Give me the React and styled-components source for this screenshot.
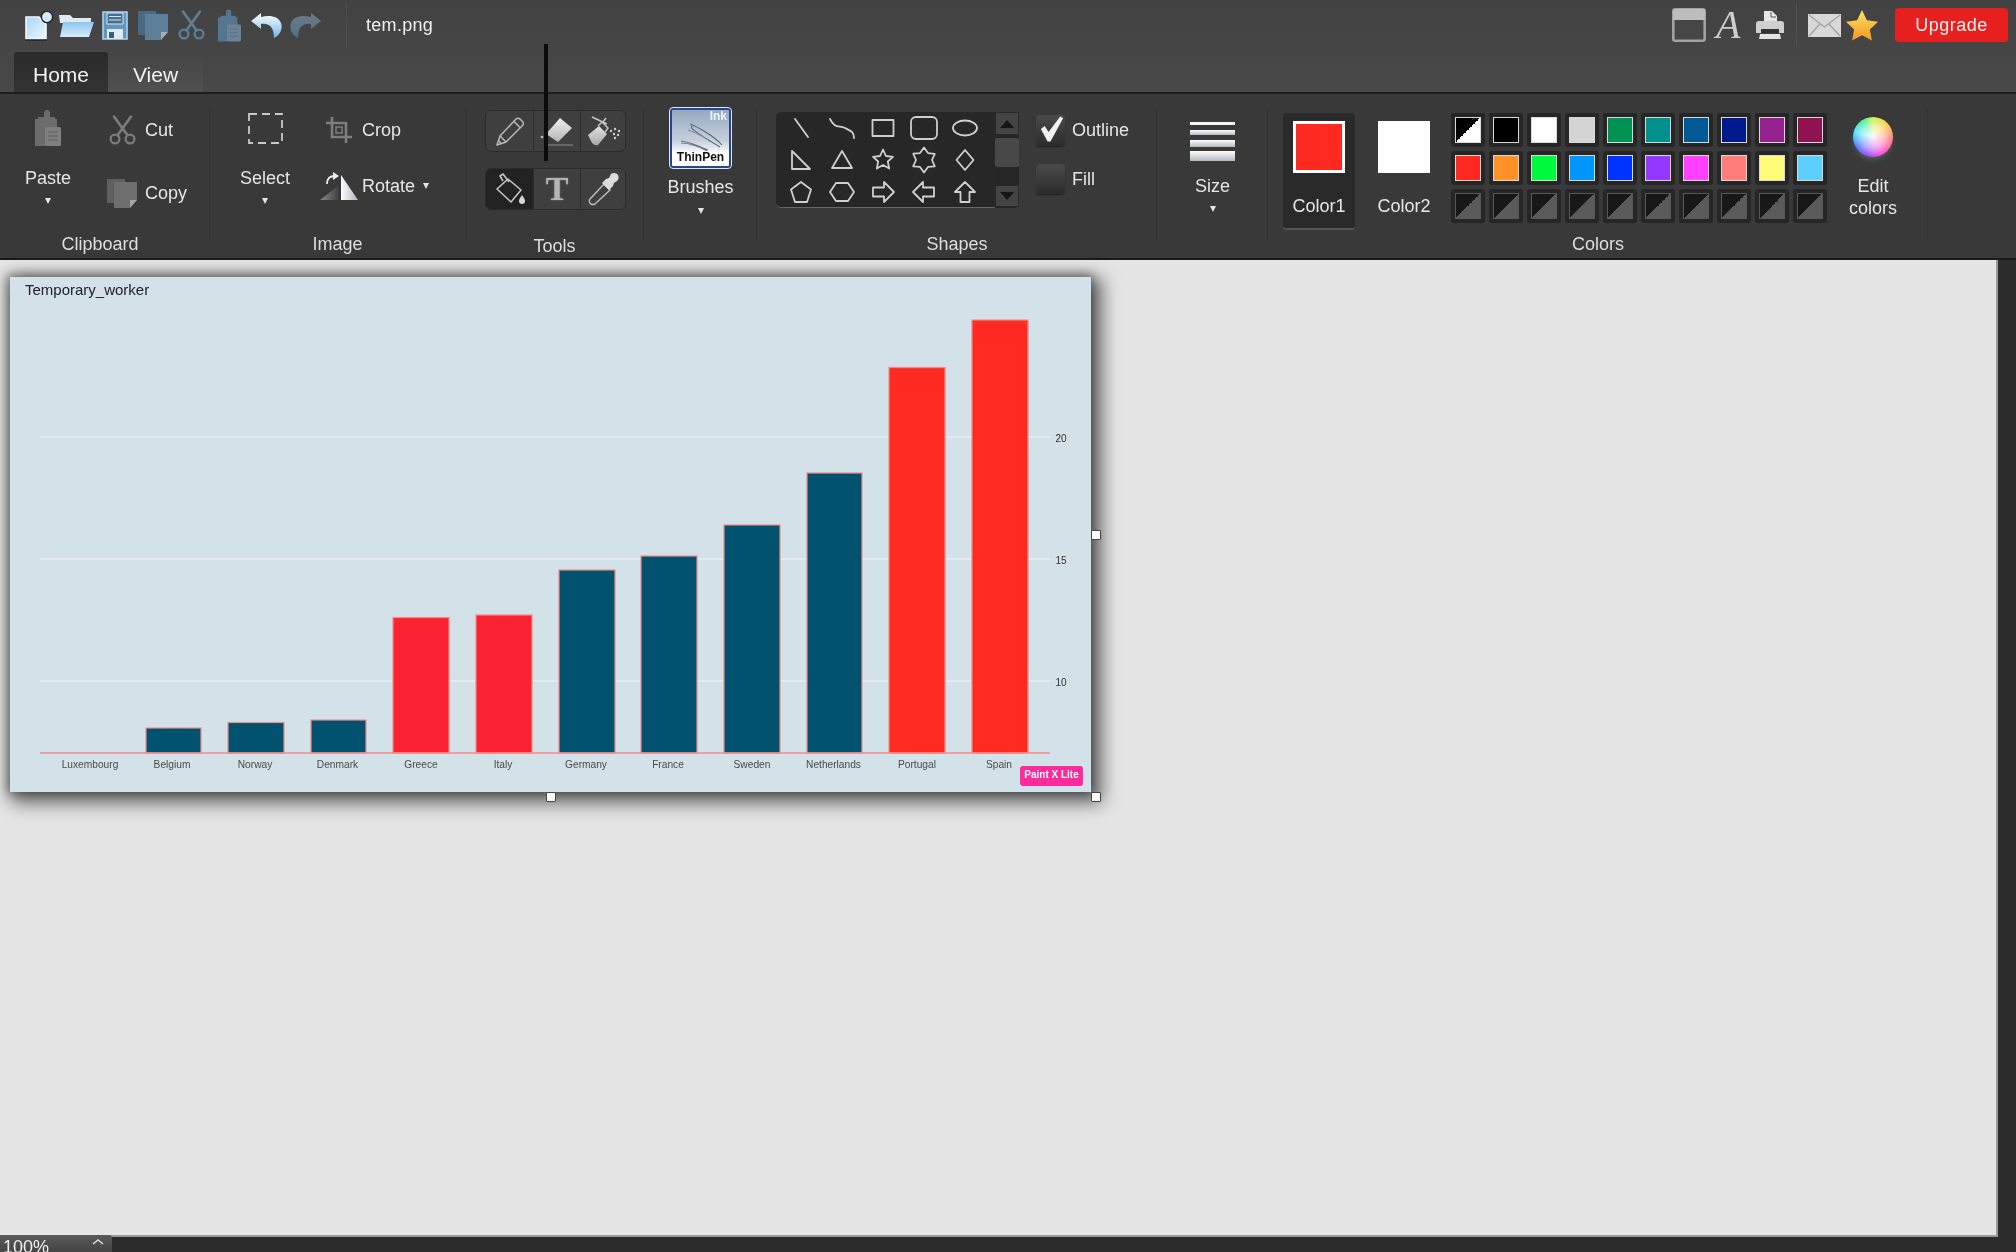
import React from "react";
import styled, { createGlobalStyle } from "styled-components";

const Global = createGlobalStyle`
  html, body { margin: 0; padding: 0; background: #2c2c2c; overflow: hidden; }
  * { box-sizing: border-box; }
`;

const Root = styled.div`
  position: relative;
  width: 2016px;
  height: 1252px;
  display: flex;
  flex-direction: column;
  overflow: hidden;
  font-family: "Liberation Sans", Arial, sans-serif;
  color: #e6e6e6;
  filter: blur(0.35px);
`;

const TitleBar = styled.header`
  height: 92px;
  flex: none;
  background: linear-gradient(#424242, #484848);
  display: flex;
  flex-direction: column;
`;
const TopRow = styled.div`
  height: 47px;
  display: flex;
  align-items: center;
  padding: 3px 0 0 24px;
`;
const Quick = styled.span`
  display: flex;
  flex: none;
  margin-left: ${p => p.$ml || 0}px;
`;
const TitleSep = styled.span`
  width: 1px;
  height: 44px;
  background: #4f4f4f;
  margin-left: ${p => p.$ml || 24}px;
`;
const FileName = styled.span`
  margin-left: 19px;
  font-size: 18px;
  letter-spacing: 0.3px;
  color: #efefef;
`;
const Spacer = styled.span`
  flex: 1;
`;
const SerifA = styled.span`
  font-family: "Liberation Serif", serif;
  font-style: italic;
  font-size: 40px;
  line-height: 34px;
  color: #cfcfcf;
  margin-left: 10px;
  width: 32px;
`;
const Upgrade = styled.button`
  width: 113px;
  height: 34px;
  margin: 0 8px 0 17px;
  border: 0;
  border-radius: 4px;
  background: #e7201f;
  color: #f8f0f0;
  font: 18px "Liberation Sans", Arial, sans-serif;
  letter-spacing: 0.5px;
`;
const Tabs = styled.nav`
  display: flex;
  padding: 5px 0 0 14px;
  height: 45px;
`;
const Tab = styled.div`
  width: ${p => (p.$active ? 94 : 95)}px;
  height: 40px;
  padding-top: 5px;
  text-align: center;
  font-size: 21px;
  line-height: 36px;
  border-radius: 3px 3px 0 0;
  color: #f2f2f2;
  background: ${p => (p.$active ? "linear-gradient(#2a2a2a, #333)" : "linear-gradient(#454545, #505050)")};
`;

const Ribbon = styled.section`
  flex: none;
  height: 168px;
  display: flex;
  background: #393939;
  border-top: 2px solid #1d1d1d;
  border-bottom: 2px solid #1b1b1b;
`;
const Group = styled.div`
  position: relative;
  width: ${p => p.$w}px;
  height: 164px;
  flex: none;
  display: flex;
  flex-direction: column;
  &::after {
    content: "";
    position: absolute;
    right: 0;
    top: 14px;
    bottom: 18px;
    width: 1px;
    background: #333;
  }
`;
const GroupBody = styled.div`
  height: 136px;
  display: flex;
  align-items: flex-start;
  padding-left: ${p => p.$pl || 0}px;
`;
const GroupLabel = styled.div`
  height: 28px;
  line-height: 28px;
  padding-top: ${p => p.$dy || 0}px;
  font-size: 18px;
  text-align: center;
  color: #dedede;
  transform: translateX(${p => p.$dx || 0}px);
`;
const LargeTool = styled.div`
  width: ${p => p.$w || 60}px;
  flex: none;
  display: flex;
  flex-direction: column;
  align-items: center;
  padding-top: ${p => p.$top}px;
  margin-left: ${p => p.$ml || 0}px;
`;
const LargeIcon = styled.div`
  height: ${p => p.$h}px;
  display: flex;
  align-items: center;
  justify-content: center;
`;
const ToolLabel = styled.div`
  margin-top: ${p => p.$gap}px;
  font-size: 18px;
  line-height: 22px;
  color: #e6e6e6;
`;
const Caret = styled.span`
  display: inline-block;
  width: 0;
  height: 0;
  margin-top: ${p => p.$mt ?? 9}px;
  margin-left: ${p => p.$ml || 0}px;
  border-left: 3.5px solid transparent;
  border-right: 3.5px solid transparent;
  border-top: 6px solid #e6e6e6;
`;
const SmallCol = styled.div`
  display: flex;
  flex-direction: column;
  gap: ${p => p.$gap}px;
  padding-top: 20px;
  margin-left: ${p => p.$ml}px;
`;
const SmallTool = styled.div`
  height: 32px;
  display: flex;
  align-items: center;
  font-size: 18px;
  color: #e6e6e6;
`;
const SmallSlot = styled.span`
  width: ${p => p.$w}px;
  display: flex;
  justify-content: center;
  align-items: center;
  margin-right: ${p => p.$mr}px;
`;

const ToolStack = styled.div`
  display: flex;
  flex-direction: column;
  gap: 16px;
  padding-top: 16px;
`;
const ToolStrip = styled.div`
  width: 141px;
  height: 42px;
  display: grid;
  grid-template-columns: 47px 47px 47px;
  background: #3f3f3f;
  border: 1px solid #2b2b2b;
  border-radius: 6px;
  overflow: hidden;
`;
const ToolCell = styled.div`
  display: flex;
  align-items: center;
  justify-content: center;
  background: ${p => (p.$active ? "#222" : "transparent")};
  border-left: ${p => (p.$first ? "0" : "1px solid #2c2c2c")};
`;
const TextTool = styled.span`
  font-family: "Liberation Serif", serif;
  font-weight: bold;
  font-size: 34px;
  line-height: 34px;
  color: #b5b5b5;
  text-shadow: 0 0 2px #888;
`;
const ToolBlackLine = styled.div`
  position: absolute;
  left: 544px;
  top: 44px;
  width: 4px;
  height: 117px;
  background: #0b0b0b;
`;

const BrushTile = styled.div`
  width: 61px;
  height: 60px;
  display: flex;
  flex-direction: column;
  align-items: center;
  border: 2px solid #27468c;
  outline: 1px solid #dfe6f2;
  border-radius: 3px;
  background: linear-gradient(#95a9c0, #c6d0dc 55%, #fff 78%);
  overflow: hidden;
`;
const BrushInk = styled.span`
  align-self: flex-end;
  padding-right: 2px;
  font-size: 12px;
  line-height: 13px;
  font-weight: bold;
  color: #eef3f8;
`;
const BrushName = styled.span`
  font-family: "Liberation Sans", sans-serif;
  font-size: 12px;
  font-weight: bold;
  line-height: 13px;
  color: #111;
`;

const ShapesRow = styled.div`
  display: flex;
  align-items: flex-start;
  padding: 18px 0 0 19px;
`;
const ShapeBox = styled.div`
  width: 219px;
  height: 96px;
  padding-left: 4px;
  display: grid;
  grid-template-columns: repeat(5, 41px);
  grid-auto-rows: 32px;
  background: #272727;
  border-radius: 5px 0 0 5px;
  border-bottom: 1px solid #666;
`;
const ShapeCell = styled.div`
  display: flex;
  align-items: center;
  justify-content: center;
`;
const ScrollCol = styled.div`
  width: 24px;
  height: 96px;
  display: flex;
  flex-direction: column;
  background: #262626;
  border-radius: 0 4px 4px 0;
`;
const ScrollBtn = styled.div`
  height: ${p => p.$h}px;
  margin-bottom: ${p => p.$mb || 0}px;
  background: #444;
  border: 1px solid #2a2a2a;
  display: flex;
  align-items: center;
  justify-content: center;
  &::before {
    content: "";
    border-left: 7px solid transparent;
    border-right: 7px solid transparent;
    ${p => (p.$up ? "border-bottom: 8px solid #161616;" : "border-top: 8px solid #161616;")}
  }
`;
const ScrollThumb = styled.div`
  height: 29px;
  margin-bottom: 18px;
  background: #484848;
  border-radius: 2px;
`;
const CheckCol = styled.div`
  display: flex;
  flex-direction: column;
  gap: 18px;
  margin-left: 17px;
  padding-top: 3px;
`;
const CheckRow = styled.div`
  display: flex;
  align-items: center;
  gap: 7px;
  height: ${p => p.$h}px;
  font-size: 18px;
  color: #e6e6e6;
`;
const CheckBox = styled.div`
  width: 29px;
  height: ${p => p.$h}px;
  border-radius: 4px;
  background: linear-gradient(#4a4a4a, #2c2c2c);
  box-shadow: 0 1px 1px #222;
  display: flex;
  align-items: center;
  justify-content: center;
`;

const ColorPick = styled.div`
  width: 72px;
  height: 117px;
  margin-top: 19px;
  margin-left: ${p => p.$ml}px;
  padding-top: 8px;
  flex: none;
  display: flex;
  flex-direction: column;
  align-items: center;
  border-radius: 4px;
  background: ${p => (p.$active ? "#2a2a2a" : "transparent")};
  border-bottom: 2px solid ${p => (p.$active ? "#555" : "transparent")};
`;
const BigSwatch = styled.div`
  width: 52px;
  height: 52px;
  background: ${p => p.$c};
  border: 3px solid #fff;
`;
const ColorLabel = styled.div`
  margin-top: 22px;
  font-size: 18px;
  line-height: 22px;
  color: #e6e6e6;
`;
const Palette = styled.div`
  display: grid;
  grid-template-columns: repeat(10, 34px);
  grid-auto-rows: 34px;
  gap: 4px;
  margin: 19px 0 0 11px;
  flex: none;
`;
const Tile = styled.div`
  padding: 4px;
  border-radius: 3px;
  background: #262626;
`;
const Chip = styled.div`
  width: 100%;
  height: 100%;
  background: ${p => p.$bg};
  border: ${p => (p.$muted ? "1px solid #585858" : "1.5px solid #d8d8d8")};
`;
const EditColors = styled.div`
  width: 60px;
  margin-left: 16px;
  padding-top: 23px;
  flex: none;
  display: flex;
  flex-direction: column;
  align-items: center;
  font-size: 18px;
  line-height: 22px;
  text-align: center;
  color: #e6e6e6;
`;
const Wheel = styled.div`
  width: 40px;
  height: 40px;
  margin-bottom: 18px;
  border-radius: 50%;
  background:
    radial-gradient(circle, rgba(255,255,255,.95) 0, rgba(255,255,255,.55) 40%, rgba(255,255,255,0) 75%),
    conic-gradient(#c8f03c, #ffc43c 50deg, #ff6a7a 100deg, #ff3ad0 150deg, #8a3cff 200deg, #3c6cff 240deg, #3ce0ff 285deg, #3cf08c 330deg, #c8f03c);
  box-shadow: 0 4px 6px -2px rgba(120, 200, 120, .35);
`;

const Workspace = styled.main`
  flex: 1;
  min-height: 0;
  display: flex;
`;
const Canvas = styled.div`
  flex: 1;
  padding: 17px 0 0 10px;
  background: #e5e5e5;
  border-right: 2px solid #999;
  border-bottom: 2px solid #999;
`;
const RightStrip = styled.div`
  width: 18px;
  flex: none;
  background: #2c2c2c;
`;
const Sheet = styled.div`
  position: relative;
  width: 1081px;
  height: 515px;
  background: #d3e1e9;
  box-shadow: 6px 6px 17px 5px rgba(0, 0, 0, .55), -1px -1px 10px 2px rgba(0, 0, 0, .38);
`;
const ChartSvg = styled.svg`
  display: block;
  font-family: "Liberation Sans", Arial, sans-serif;
`;
const Handle = styled.span`
  position: absolute;
  width: 10px;
  height: 10px;
  background: #fff;
  border: 1.5px solid #444;
  border-radius: 1px;
  ${p => p.$pos}
`;
const Watermark = styled.span`
  position: absolute;
  right: 8px;
  bottom: 6px;
  width: 63px;
  height: 20px;
  border-radius: 3px;
  background: #ff2b9d;
  color: #fff;
  font-size: 10px;
  font-weight: bold;
  line-height: 18px;
  text-align: center;
  white-space: nowrap;
`;
const StatusBar = styled.footer`
  height: 15px;
  flex: none;
  background: #2c2c2c;
`;
const ZoomBox = styled.div`
  position: relative;
  width: 112px;
  height: 17px;
  margin-top: -2px;
  padding-left: 3px;
  display: flex;
  overflow: hidden;
  background: linear-gradient(#5a5a5a, #444);
  border-radius: 0 3px 0 0;
  font-size: 18px;
  line-height: 24px;
  color: #eee;
`;
const ZoomChevron = styled.svg`
  position: absolute;
  right: 8px;
  top: 3px;
`;

/* ---------- icons ---------- */
const Gr = ({ id, a, b, x2 = 0, y2 = 1 }) => (
  <linearGradient id={id} x1="0" y1="0" x2={x2} y2={y2}>
    <stop offset="0" stopColor={a} />
    <stop offset="1" stopColor={b} />
  </linearGradient>
);

const Scissors = ({ c, w = 27, h = 30 }) => (
  <svg width={w} height={h} viewBox="0 0 27 30" fill="none" stroke={c} strokeWidth="2.2" strokeLinecap="round">
    <circle cx="6" cy="24" r="4.4" />
    <circle cx="21" cy="24" r="4.4" />
    <path d="M8.5 20.3 22 1.5M18.5 20.3 5 1.5" strokeWidth="2.6" />
  </svg>
);
const Docs = ({ a, b, w = 30, h = 30 }) => (
  <svg width={w} height={h} viewBox="0 0 30 30">
    <path d="M0 1h18v24H0z" fill={a} />
    <path d="M7 4h23v18l-7 8H7z" fill={b} />
    <path d="M30 22h-7v8z" fill="#d5d5d5" opacity=".55" />
  </svg>
);
const Clip = ({ c, d, w = 26, h = 36 }) => (
  <svg width={w} height={h} viewBox="0 0 26 36">
    <path d="M0 9h3V7h6V3a3 3 0 0 1 6 0v4h5v2h2v10H10v17H0z" fill={c} />
    <rect x="10" y="17" width="16" height="19" rx="1.5" fill={d} />
    <path d="M13 22h10M13 26h10M13 30h10" stroke={c} strokeWidth="1.4" />
  </svg>
);
const IconNew = () => (
  <svg width="30" height="31" viewBox="0 0 30 31">
    <defs><Gr id="nw" a="#a6d5f5" b="#eef8ff" x2="1" /></defs>
    <path d="M2 7h13l7 7v15H2z" fill="url(#nw)" stroke="#f4f9fc" strokeWidth="1.6" />
    <path d="M1 30h22" stroke="#1e1e1e" strokeWidth="1.4" />
    <circle cx="23" cy="7" r="5.6" fill="#d5ebfa" stroke="#262626" strokeWidth="1.4" />
  </svg>
);
const IconOpen = () => (
  <svg width="35" height="24" viewBox="0 0 35 24">
    <defs><Gr id="op" a="#8cc6ef" b="#d6ebfa" /></defs>
    <path d="M0 2h11l3 3h18v5H1z" fill="#dfe9f1" />
    <path d="M4 9h31l-5 15H1z" fill="url(#op)" />
  </svg>
);
const IconSave = () => (
  <svg width="26" height="29" viewBox="0 0 26 29">
    <path d="M1 1h24v27H1z" fill="#5f96c2" stroke="#a9d3ef" strokeWidth="1.6" />
    <path d="M5 2h16v11H5z" fill="#48708e" stroke="#d5e8f5" />
    <path d="M7 5.5h12M7 9h12" stroke="#d5e8f5" strokeWidth="1.2" />
    <path d="M5 18h16v10H5z" fill="#dcecf7" />
    <path d="M7 21h5v6H7z" fill="#3f5e76" />
  </svg>
);
const IconUndo = ({ id, a, b, flip }) => (
  <svg width="33" height="27" viewBox="0 0 33 27" style={flip ? { transform: "scaleX(-1)" } : undefined}>
    <defs><Gr id={id} a={a} b={b} /></defs>
    <path d="M11 1 1 9l10 8v-5c9-1 13 4 13 14 6-3 9-9 7-15C28 4 20 3 11 5z" fill={`url(#${id})`} />
  </svg>
);
const IconPrinter = () => (
  <svg width="30" height="30" viewBox="0 0 30 30">
    <path d="M9 1h8l5 5v8H9z" fill="#e6e6e6" />
    <path d="M16 2v5h5" fill="none" stroke="#555" />
    <path d="M4 11h22a3 3 0 0 1 3 3v9H1v-9a3 3 0 0 1 3-3z" fill="#cfcfcf" />
    <path d="M6 19h18v4H6z" fill="#333" />
    <path d="M5 24h20l1 5H4z" fill="#e2e2e2" />
  </svg>
);
const IconMail = () => (
  <svg width="33" height="23" viewBox="0 0 33 23">
    <path d="M0 0h33v23H0z" fill="#d8d8d8" />
    <path d="M1 1l15.5 12L32 1M1 22l11-12M32 22 21 10" fill="none" stroke="#a0a0a0" strokeWidth="1.2" />
  </svg>
);
const IconStar = () => (
  <svg width="32" height="31" viewBox="0 0 32 31">
    <defs><Gr id="st" a="#ffe06e" b="#f29a18" /></defs>
    <path d="M16 0l4.900 10.200 11.100 1.500-8.100 7.700 2 11.100L16 25.200 6.100 30.500l2-11.100L0 11.700l11.100-1.500z" fill="url(#st)" />
  </svg>
);
const IconWindow = () => (
  <svg width="34" height="34" viewBox="0 0 34 34">
    <rect x="1.300" y="1.300" width="31.400" height="31.400" rx="2" fill="#464646" stroke="#a2a2a2" strokeWidth="2.600" />
    <path d="M1 3a2 2 0 0 1 2-2h28a2 2 0 0 1 2 2v9H1z" fill="#bdbdbd" />
  </svg>
);
const IconSelect = () => (
  <svg width="35" height="31" viewBox="0 0 35 31">
    <rect x="1" y="1" width="33" height="29" fill="none" stroke="#c8c8c8" strokeWidth="1.800" strokeDasharray="8 5" />
  </svg>
);
const IconCrop = () => (
  <svg width="26" height="26" viewBox="0 0 26 26" fill="none" stroke="#7e7e7e" strokeWidth="2.600">
    <path d="M6 0v20h20M0 6h20v20" />
    <rect x="10" y="10" width="6" height="6" strokeWidth="1.500" />
  </svg>
);
const IconRotate = () => (
  <svg width="38" height="30" viewBox="0 0 38 30">
    <defs>
      <Gr id="ro1" a="#8a8a8a" b="#444" x2="1" y2="0" />
      <Gr id="ro2" a="#ffffff" b="#aeb4bc" x2="1" y2="0" />
    </defs>
    <path d="M0 29 18 15v14z" fill="url(#ro1)" />
    <path d="M21 4l17 25H21z" fill="url(#ro2)" />
    <path d="M7 13C7 7 10 5 15 5" fill="none" stroke="#eee" strokeWidth="1.800" />
    <path d="M13 1l6 4-6 4z" fill="#eee" />
  </svg>
);
const IconPencil = () => (
  <svg width="32" height="32" viewBox="0 0 32 32" fill="none" stroke="#b9b9b9" strokeWidth="1.500" strokeLinejoin="round">
    <path d="M3 30l3-9L22 4a2.800 2.800 0 0 1 4 0l2.500 2.500a2.800 2.800 0 0 1 0 4L12 27z" />
    <path d="M6 21l6 6M20 6.500l6 6M4.500 25.500l2.500 2.500" />
  </svg>
);
const IconEraser = () => (
  <svg width="34" height="32" viewBox="0 0 34 32">
    <defs><Gr id="er" a="#eeeeee" b="#b5b5b5" /></defs>
    <path d="M6 19 20 3l12 10-14 14z" fill="url(#er)" />
    <path d="M7 30h26" stroke="#666" strokeWidth="2" />
    <circle cx="2" cy="22" r="1.300" fill="#bbb" />
  </svg>
);
const IconSpray = () => (
  <svg width="34" height="30" viewBox="0 0 34 30">
    <defs><Gr id="sp" a="#e2e2e2" b="#a8a8a8" /></defs>
    <path d="M1 19 12 10l8 8-9 11q-3 1-6-2z" fill="url(#sp)" />
    <path d="M11 10l4-4 6 6-3 4M5 1l15 7M16 6l3-4" fill="none" stroke="#c4c4c4" strokeWidth="1.500" />
    <g fill="#ccc">
      <circle cx="24" cy="15" r="1.200" /><circle cx="28" cy="13" r="1.200" /><circle cx="32" cy="15" r="1.200" />
      <circle cx="27" cy="18" r="1.200" /><circle cx="31" cy="19" r="1.200" /><circle cx="28" cy="22" r="1.200" />
    </g>
  </svg>
);
const IconBucket = () => (
  <svg width="32" height="32" viewBox="0 0 32 32" fill="none" stroke="#c4c4c4" strokeWidth="1.600" strokeLinejoin="round">
    <path d="M3 16 14 6l13 11-10 12z" />
    <path d="M9 8l-3-5 3-2 6 8" />
    <path d="M28 22c2 3 3 4 3 6a3 3 0 0 1-6 0c0-2 1-3 3-6z" fill="#d6d6d6" stroke="none" />
  </svg>
);
const IconDropper = () => (
  <svg width="32" height="34" viewBox="0 0 32 34">
    <path d="M3 32c-2-1-2-4-1-5l14-15 6 6L7 32q-2 1-4 0z" fill="none" stroke="#bcbcbc" strokeWidth="1.500" />
    <path d="M14 11l4-4 3-1 2-4c2-2 6-1 7 1s1 4-1 6l-3 2-1 3-4 4z" fill="#dcdcdc" />
  </svg>
);
const IconBrush = () => (
  <svg width="50" height="28" viewBox="0 0 50 28" fill="none" stroke="#5d6570" strokeWidth="1.100">
    <path d="M14 1c8 3 24 12 32 21M16 3c-2 2 0 4 28 21" />
    <path d="M5 18c8 1 18 5 27 9M5 20c8 0 20 4 26 8" stroke="#707780" />
    <path d="M12 7c10 4 20 9 22 12" stroke="#8a9099" />
  </svg>
);
const IconSize = () => (
  <svg width="45" height="39" viewBox="0 0 45 39">
    <defs><Gr id="sz" a="#ffffff" b="#b4b8bf" /></defs>
    <rect y="0" width="45" height="3" fill="#f4f4f4" />
    <rect y="8" width="45" height="5" fill="url(#sz)" />
    <rect y="18" width="45" height="7" fill="url(#sz)" />
    <rect y="29" width="45" height="10" fill="url(#sz)" />
  </svg>
);
const Tick = () => (
  <svg width="30" height="30" viewBox="0 0 30 30" style={{ marginTop: -4 }}>
    <path d="M5 15l4-3 4 6L25 2l3 2-13 24h-3z" fill="#f2f2f2" />
  </svg>
);

const star = (n, R, r) =>
  Array.from({ length: n * 2 }, (_, i) => {
    const a = (Math.PI * i) / n - Math.PI / 2;
    const rad = i % 2 ? r : R;
    return `${(14 + rad * Math.cos(a)).toFixed(1)},${(14 + rad * Math.sin(a)).toFixed(1)}`;
  }).join(" ");

const SHAPES = [
  <path d="M8 5l13 18" />,
  <path d="M2 5c5 10 9 6 15 9s9 4 9 10" />,
  <rect x="3.500" y="6" width="21" height="16" />,
  <rect x="1" y="3" width="26" height="22" rx="5" />,
  <ellipse cx="14" cy="14" rx="12" ry="7.500" />,
  <path d="M5 5v18h18z" />,
  <path d="M14 5l10 17H4z" />,
  <polygon points={star(5, 10.500, 5)} />,
  <polygon points={star(6, 12.500, 8)} />,
  <path d="M14 4l8.500 10L14 24 5.500 14z" />,
  <path d="M14 4l10 7.500L20 24H8L4 11.500z" />,
  <path d="M8 5h12l6 9-6 9H8l-6-9z" />,
  <path d="M4 9.500h11V4l10 10-10 10v-5.500H4z" />,
  <path d="M24 9.500H13V4L3 14l10 10v-5.500h11z" />,
  <path d="M9.500 24V14H4L14 4l10 10h-5.500v10z" />,
];

const ROW1 = ["half", "#000000", "#ffffff", "#d4d4d4", "#009155", "#00918e", "#005a96", "#001a8e", "#95218f", "#8e1350"];
const ROW2 = ["#ff2a1f", "#ff9226", "#00f93a", "#0096ff", "#0033ff", "#9437ff", "#ff40ff", "#ff7e79", "#fffc79", "#5ccfff"];
const HALF = "linear-gradient(135deg, #000 50%, #fff 50%)";
const EMPTY = "linear-gradient(135deg, #181818 50%, #5a5a5a 50%)";

const NAVY = "#01526f";
const RED1 = "#fb2331";
const RED2 = "#ff2a22";
const BARS = [
  { x: 146, w: 55, top: 728, c: NAVY },
  { x: 228, w: 56, top: 722.5, c: NAVY },
  { x: 311, w: 55, top: 720, c: NAVY },
  { x: 393, w: 56, top: 617.5, c: RED1 },
  { x: 476, w: 56, top: 615, c: RED1 },
  { x: 559, w: 56, top: 570, c: NAVY },
  { x: 641, w: 56, top: 556, c: NAVY },
  { x: 724, w: 56, top: 525, c: NAVY },
  { x: 807, w: 55, top: 473, c: NAVY },
  { x: 889, w: 56, top: 367.5, c: RED2 },
  { x: 972, w: 56, top: 320, c: RED2 },
];
const COUNTRIES = [
  ["Luxembourg", 90], ["Belgium", 172], ["Norway", 255], ["Denmark", 337.5], ["Greece", 421], ["Italy", 503],
  ["Germany", 586], ["France", 668], ["Sweden", 752], ["Netherlands", 833.5], ["Portugal", 917], ["Spain", 999],
];
const TICKS = [["20", 437], ["15", 559], ["10", 681]];

const Chart = () => (
  <ChartSvg width="1081" height="515" viewBox="10 277 1081 515">
    <text x="25" y="295" fontSize="15" fill="#222">Temporary_worker</text>
    {TICKS.map(([t, y]) => (
      <g key={t}>
        <line x1="40" x2="1050" y1={y} y2={y} stroke="#e6eef2" strokeWidth="1.600" />
        <text x="1061" y={y + 5} fontSize="10" textAnchor="middle" fill="#333">{t}</text>
      </g>
    ))}
    {BARS.map(b => (
      <rect key={b.x} x={b.x} y={b.top} width={b.w} height={753 - b.top} fill={b.c} stroke="#f58a88" strokeWidth="1.200" />
    ))}
    <line x1="40" x2="1050" y1="753" y2="753" stroke="#f58a88" strokeWidth="1.400" />
    {COUNTRIES.map(([n, x]) => (
      <text key={n} x={x} y="768" fontSize="10.200" textAnchor="middle" fill="#4a4a4a">{n}</text>
    ))}
  </ChartSvg>
);

export default function App() {
  return (
    <Root>
      <Global />
      <TitleBar>
        <TopRow>
          <Quick><IconNew /></Quick>
          <Quick $ml={5}><IconOpen /></Quick>
          <Quick $ml={8}><IconSave /></Quick>
          <Quick $ml={10}><Docs a="#4b6a82" b="#5e7f99" /></Quick>
          <Quick $ml={10}><Scissors c="#5f7f99" /></Quick>
          <Quick $ml={13}><Clip c="#557690" d="#6e8396" w={23} h={33} /></Quick>
          <Quick $ml={9}><IconUndo id="un" a="#ffffff" b="#6fb5e6" /></Quick>
          <Quick $ml={6}><IconUndo id="re" a="#6f7a82" b="#4d728f" flip /></Quick>
          <TitleSep />
          <FileName>tem.png</FileName>
          <Spacer />
          <Quick><IconWindow /></Quick>
          <SerifA>A</SerifA>
          <Quick $ml={7}><IconPrinter /></Quick>
          <TitleSep $ml={11} />
          <Quick $ml={11}><IconMail /></Quick>
          <Quick $ml={5}><IconStar /></Quick>
          <Upgrade>Upgrade</Upgrade>
        </TopRow>
        <Tabs>
          <Tab $active>Home</Tab>
          <Tab>View</Tab>
        </Tabs>
      </TitleBar>

      <Ribbon>
        <Group $w={210}>
          <GroupBody $pl={18}>
            <LargeTool $top={16}>
              <LargeIcon $h={36}><Clip c="#6c6c6c" d="#7f7f7f" /></LargeIcon>
              <ToolLabel $gap={21}>Paste</ToolLabel>
              <Caret />
            </LargeTool>
            <SmallCol $ml={29} $gap={31}>
              <SmallTool><SmallSlot $w={30} $mr={8}><Scissors c="#7d7d7d" /></SmallSlot>Cut</SmallTool>
              <SmallTool><SmallSlot $w={30} $mr={8}><Docs a="#5f5f5f" b="#6e6e6e" /></SmallSlot>Copy</SmallTool>
            </SmallCol>
          </GroupBody>
          <GroupLabel $dx={-5}>Clipboard</GroupLabel>
        </Group>

        <Group $w={257}>
          <GroupBody $pl={25}>
            <LargeTool $top={16}>
              <LargeIcon $h={36}><IconSelect /></LargeIcon>
              <ToolLabel $gap={21}>Select</ToolLabel>
              <Caret />
            </LargeTool>
            <SmallCol $ml={25} $gap={24}>
              <SmallTool><SmallSlot $w={38} $mr={4}><IconCrop /></SmallSlot>Crop</SmallTool>
              <SmallTool>
                <SmallSlot $w={38} $mr={4}><IconRotate /></SmallSlot>Rotate
                <Caret $mt={0} $ml={8} />
              </SmallTool>
            </SmallCol>
          </GroupBody>
          <GroupLabel $dx={-1}>Image</GroupLabel>
        </Group>

        <Group $w={177}>
          <GroupBody $pl={18}>
            <ToolStack>
              <ToolStrip>
                <ToolCell $first><IconPencil /></ToolCell>
                <ToolCell><IconEraser /></ToolCell>
                <ToolCell><IconSpray /></ToolCell>
              </ToolStrip>
              <ToolStrip>
                <ToolCell $first $active><IconBucket /></ToolCell>
                <ToolCell><TextTool>T</TextTool></ToolCell>
                <ToolCell><IconDropper /></ToolCell>
              </ToolStrip>
            </ToolStack>
          </GroupBody>
          <GroupLabel $dy={2} $dx={-1}>Tools</GroupLabel>
        </Group>

        <Group $w={113}>
          <GroupBody $pl={0}>
            <LargeTool $top={14} $w={113}>
              <LargeIcon $h={60}>
                <BrushTile>
                  <BrushInk>Ink</BrushInk>
                  <IconBrush />
                  <BrushName>ThinPen</BrushName>
                </BrushTile>
              </LargeIcon>
              <ToolLabel $gap={8}>Brushes</ToolLabel>
              <Caret $mt={10} />
            </LargeTool>
          </GroupBody>
        </Group>

        <Group $w={400}>
          <GroupBody>
            <ShapesRow>
              <ShapeBox>
                {SHAPES.map((s, i) => (
                  <ShapeCell key={i}>
                    <svg width="28" height="28" viewBox="0 0 28 28" fill="none" stroke="#cfcfcf" strokeWidth="1.800" strokeLinejoin="round" strokeLinecap="round">
                      {s}
                    </svg>
                  </ShapeCell>
                ))}
              </ShapeBox>
              <ScrollCol>
                <ScrollBtn $h={23} $mb={3} $up />
                <ScrollThumb />
                <ScrollBtn $h={22} />
              </ScrollCol>
              <CheckCol>
                <CheckRow $h={31}><CheckBox $h={31}><Tick /></CheckBox>Outline</CheckRow>
                <CheckRow $h={30}><CheckBox $h={30} />Fill</CheckRow>
              </CheckCol>
            </ShapesRow>
          </GroupBody>
          <GroupLabel>Shapes</GroupLabel>
        </Group>

        <Group $w={111}>
          <GroupBody>
            <LargeTool $top={28} $w={111}>
              <LargeIcon $h={39}><IconSize /></LargeIcon>
              <ToolLabel $gap={14}>Size</ToolLabel>
              <Caret />
            </LargeTool>
          </GroupBody>
        </Group>

        <Group $w={660}>
          <GroupBody>
            <ColorPick $ml={15} $active>
              <BigSwatch $c="#ff2a1f" />
              <ColorLabel>Color1</ColorLabel>
            </ColorPick>
            <ColorPick $ml={13}>
              <BigSwatch $c="#ffffff" />
              <ColorLabel>Color2</ColorLabel>
            </ColorPick>
            <Palette>
              {ROW1.map((c, i) => <Tile key={"a" + i}><Chip $bg={c === "half" ? HALF : c} /></Tile>)}
              {ROW2.map((c, i) => <Tile key={"b" + i}><Chip $bg={c} /></Tile>)}
              {ROW2.map((_, i) => <Tile key={"c" + i}><Chip $bg={EMPTY} $muted /></Tile>)}
            </Palette>
            <EditColors>
              <Wheel />
              Edit<br />colors
            </EditColors>
          </GroupBody>
          <GroupLabel>Colors</GroupLabel>
        </Group>
      </Ribbon>

      <Workspace>
        <Canvas>
          <Sheet>
            <Chart />
            <Watermark>Paint X Lite</Watermark>
            <Handle $pos="right: -10px; top: 253px;" />
            <Handle $pos="left: 536px; bottom: -10px;" />
            <Handle $pos="right: -10px; bottom: -10px;" />
          </Sheet>
        </Canvas>
        <RightStrip />
      </Workspace>
      <StatusBar>
        <ZoomBox>
          100%
          <ZoomChevron width="12" height="8" viewBox="0 0 12 8" fill="none" stroke="#ddd" strokeWidth="1.500">
            <path d="M1 6l5-4 5 4" />
          </ZoomChevron>
        </ZoomBox>
      </StatusBar>
      <ToolBlackLine />
    </Root>
  );
}
